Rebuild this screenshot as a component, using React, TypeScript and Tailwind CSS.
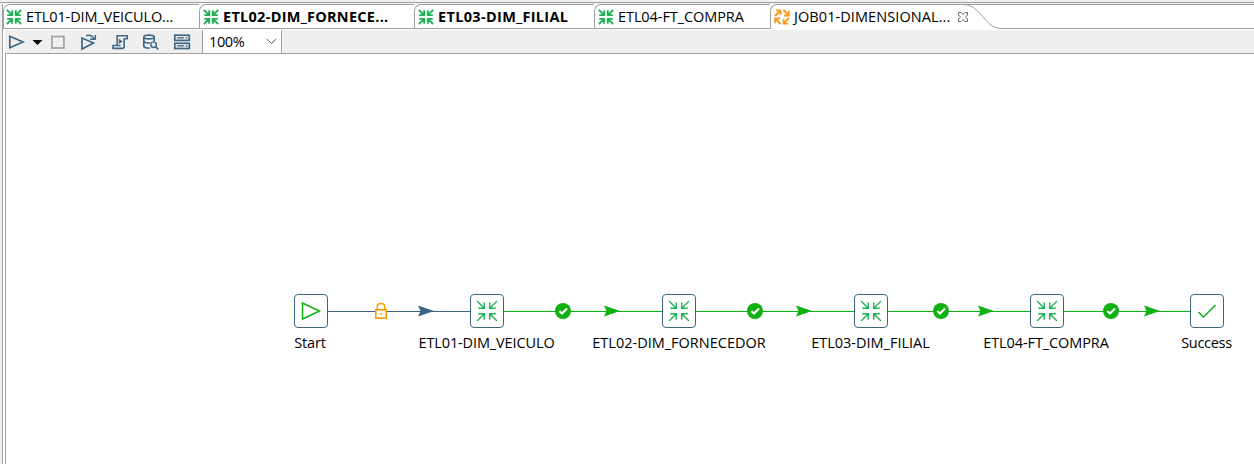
import React from "react";

function TransformIcon({ thin = false }: { thin?: boolean }) {
  return thin ? (
    <svg width="22" height="22" viewBox="0 0 22 22" fill="none" stroke="#1fb254" strokeWidth="1.4">
      <path d="M1 1L8 8M2.2 8.3H8.3V2.2M21 1L14 8M13.7 2.2V8.3H19.8M1 21L8 14M2.2 13.7H8.3V19.8M21 21L14 14M13.7 19.8V13.7H19.8" />
    </svg>
  ) : (
    <svg className="shrink-0" width="16" height="16" viewBox="0 0 16 16" fill="none" stroke="#1fb254" strokeWidth="1.9">
      <path d="M.8 .8L6 6M1.2 6.1H6.2V1.2M15.2 .8L10 6M9.8 1.2V6.1H14.8M.8 15.2L6 10M1.2 9.9H6.2V14.8M15.2 15.2L10 10M9.8 14.8V9.9H14.8" />
    </svg>
  );
}

function JobIcon() {
  return (
    <svg className="shrink-0" width="16" height="16" viewBox="0 0 16 16" fill="none" stroke="#f9991c" strokeWidth="1.8">
      <path d="M1 7L6 2M2 1.4H6.6V6M9.5 1L14.5 6M14.8 1.8V6.5H10M6.5 15L1.5 10M1.2 14.2V9.5H6M15 9L10 14M9.6 10V14.6H14.2" />
    </svg>
  );
}

const tabs = [
  { text: "ETL01-DIM_VEICULO...", width: "w-[196px]", style: "tracking-[-0.12px]", pad: "pl-[2px]" },
  { text: "ETL02-DIM_FORNECE...", width: "w-[215px]", style: "font-bold tracking-[0.28px]", pad: "pl-[3px]" },
  { text: "ETL03-DIM_FILIAL", width: "w-[180px]", style: "font-bold tracking-[0.33px]", pad: "pl-[3px]" },
  { text: "ETL04-FT_COMPRA", width: "w-[176px]", style: "tracking-[-0.08px]", pad: "pl-[3px]" },
];

function Tabs() {
  return (
    <div className="flex h-[25px] pl-[3px] text-[14.5px] leading-[24px]">
      {tabs.map((t) => (
        <div key={t.text} className={`flex ${t.width} ${t.pad} shrink-0 items-center gap-1 rounded-tl-[7px] border-t border-b border-l border-[#a0a0a0] whitespace-nowrap`}>
          <TransformIcon />
          <span className={t.style}>{t.text}</span>
        </div>
      ))}
      <div className="flex w-[201px] shrink-0 items-center gap-1 rounded-tl-[7px] border-t border-l border-[#a0a0a0] pl-[3px] whitespace-nowrap">
        <JobIcon />
        <span className="w-[159px] tracking-[0.08px]">JOB01-DIMENSIONAL...</span>
        <svg className="shrink-0" width="12" height="12" viewBox="0 0 12 12" fill="none" stroke="#666" strokeWidth="1">
          <path d="M1.5 1.5H4L6 3.5L8 1.5H10.5V4L8.5 6L10.5 8V10.5H8L6 8.5L4 10.5H1.5V8L3.5 6L1.5 4Z" />
        </svg>
      </div>
      <svg className="shrink-0 overflow-visible" width="36" height="25" viewBox="0 0 36 25" fill="none" stroke="#a0a0a0">
        <path d="M0 .5H36M-10 .5C0 .5 4 4 9.5 10C16 17 20 24.5 31 24.5H36" />
      </svg>
      <div className="flex-1 border-t border-b border-[#a0a0a0]" />
    </div>
  );
}

function Toolbar() {
  return (
    <div className="mt-px flex h-[24px] items-center border-b border-[#a0a0a0] bg-[#efefef]">
      <svg className="shrink-0" width="197" height="23" viewBox="5 30 197 23" fill="none" stroke="#3f6785" strokeWidth="1.7">
        <path d="M9.8 36.2V47.8L23 42Z" />
        <path d="M32.5 40H42.5L37.5 45Z" fill="#000" stroke="none" />
        <rect x="51.9" y="36.5" width="12" height="11.5" stroke="#a3a3a3" />
        <path d="M82 38V49L93.5 43Z" />
        <path d="M86 35.8C89.5 34.5 92.5 36 94 39M90 39.3H95.3V35" strokeWidth="1.5" />
        <path d="M117.2 45.5V35.7H127.2V38.7H124.2V46.5C124.2 47.6 123.6 48.4 122.3 48.4H113V45.5H120.7" strokeWidth="1.6" />
        <path d="M118.8 38.7L122.8 41.4L118.8 44.1Z" fill="#3f6785" stroke="none" />
        <ellipse cx="149" cy="37" rx="5.2" ry="1.9" />
        <path d="M143.8 37V46.2C144 48 147 48.2 149.5 48.2M154.2 37V41M143.8 41.5C145 43 148 43 150 43" />
        <circle cx="153.6" cy="44.7" r="2.8" strokeWidth="1.4" />
        <path d="M155.7 46.8L158.3 49.3" />
        <rect x="174.8" y="35.2" width="14.5" height="5.2" />
        <rect x="174.8" y="43.3" width="14.5" height="5.2" />
        <path d="M177 37.8H184M185.5 37.8H187.5M177 45.9H184M185.5 45.9H187.5" strokeWidth="1.2" />
      </svg>
      <div className="flex h-[23px] w-[80px] shrink-0 items-center justify-between border-r border-l border-[#a0a0a0] bg-white pr-1 pl-[6px] text-[14.5px] tracking-[-0.4px]">
        <span>100%</span>
        <svg width="11" height="7" viewBox="0 0 11 7" fill="none" stroke="#555">
          <path d="M.8 1L5.5 5.5L10.2 1" />
        </svg>
      </div>
    </div>
  );
}

const nodes = [
  { text: "Start", icon: "start", box: "left-[288px]", label: "left-[204px] tracking-[-0.2px]" },
  { text: "ETL01-DIM_VEICULO", icon: "etl", box: "left-[464px]", label: "left-[380.5px] tracking-[-0.12px]" },
  { text: "ETL02-DIM_FORNECEDOR", icon: "etl", box: "left-[656px]", label: "left-[573px]" },
  { text: "ETL03-DIM_FILIAL", icon: "etl", box: "left-[848px]", label: "left-[764.5px]" },
  { text: "ETL04-FT_COMPRA", icon: "etl", box: "left-[1024px]", label: "left-[940px] tracking-[-0.1px]" },
  { text: "Success", icon: "ok", box: "left-[1184px]", label: "left-[1100.5px] tracking-[-0.3px]" },
];

const hops = [
  { x1: 504, x2: 662, dot: 563, arrow: 604 },
  { x1: 696, x2: 854, dot: 755, arrow: 796 },
  { x1: 888, x2: 1030, dot: 941, arrow: 978 },
  { x1: 1064, x2: 1190, dot: 1111, arrow: 1144 },
];

function Canvas() {
  return (
    <div className="relative ml-[5px] h-[410px] overflow-hidden border-l border-[#a0a0a0]">
      <svg className="absolute top-0 left-0" width="1248" height="410" viewBox="6 54 1248 410" fill="none">
        <path d="M328 311.5H470" stroke="#3d6480" />
        <path d="M418 305.5L434 311L418 316.5L420.5 311Z" fill="#3d6480" />
        <rect x="375.8" y="309.8" width="10.4" height="8.4" fill="#fff" stroke="#ff9900" strokeWidth="1.6" />
        <path d="M377.3 309V306.5C377.3 302.6 384.7 302.6 384.7 306.5V309" stroke="#ff9900" strokeWidth="1.5" />
        <rect x="380.2" y="313.2" width="1.6" height="1.6" fill="#ff9900" />
        {hops.map((h) => (
          <g key={h.x1}>
            <path d={`M${h.x1} 311.5H${h.x2}`} stroke="#0eb110" />
            <circle cx={h.dot} cy="311" r="8" fill="#0eb110" />
            <path d={`M${h.dot - 3.7} 311L${h.dot - 1} 313.5L${h.dot + 4} 308.5`} stroke="#fff" strokeWidth="2" />
            <path d={`M${h.arrow} 305.5L${h.arrow + 16} 311L${h.arrow} 316.5L${h.arrow + 2.5} 311Z`} fill="#0eb110" />
          </g>
        ))}
      </svg>
      {nodes.map((n) => (
        <React.Fragment key={n.text}>
          <div className={`absolute top-[240px] ${n.box} flex size-[34px] items-center justify-center rounded-[4px] border border-[#3d6480] bg-white`}>
            {n.icon === "etl" && <TransformIcon thin />}
            {n.icon === "start" && (
              <svg width="22" height="22" viewBox="0 0 22 22" fill="none" stroke="#0eb110" strokeWidth="1.5">
                <path d="M2.5 3V19L19.5 11Z" />
              </svg>
            )}
            {n.icon === "ok" && (
              <svg width="22" height="22" viewBox="0 0 22 22" fill="none" stroke="#0eb110" strokeWidth="1.5">
                <path d="M2.5 12L7.5 17L19.5 5" />
              </svg>
            )}
          </div>
          <div className={`absolute top-[279px] ${n.label} w-[200px] text-center text-[14.5px] leading-[20px] whitespace-nowrap`}>{n.text}</div>
        </React.Fragment>
      ))}
    </div>
  );
}

export default function App() {
  return (
    <div className="h-[464px] w-[1254px] overflow-hidden bg-white font-['Open_Sans','Noto_Sans',sans-serif] text-black">
      <div className="h-[3px] border-b border-[#a0a0a0] bg-[#f0f0f0]" />
      <div className="h-px bg-[#f0f0f0]" />
      <div className="flex h-[460px]">
        <div className="w-[3px] shrink-0 border-r border-[#a0a0a0] bg-[#f0f0f0]" />
        <div className="-ml-[3px] w-[1254px] shrink-0">
          <Tabs />
          <div className="pl-[5px]">
            <Toolbar />
          </div>
          <Canvas />
        </div>
      </div>
    </div>
  );
}
